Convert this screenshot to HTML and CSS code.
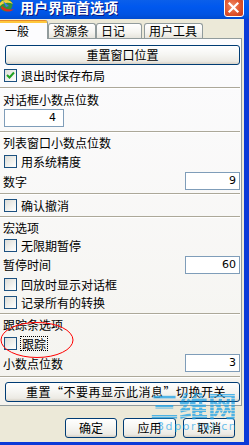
FILE: index.html
```html
<!DOCTYPE html>
<html>
<head>
<meta charset="utf-8">
<link rel="stylesheet" href="styles.css">
</head>
<body>
<div class="window">
  <div class="titlebar">
    <svg class="app-icon" viewBox="0 0 15 14" width="15" height="14">
      <circle cx="6" cy="5" r="6.5" fill="#2f8f3c"/>
      <path d="M0 3 C3 -1 10 -1 13 4 C9 2 4 2 0 6 Z" fill="#f4d23a"/>
      <path d="M1 8 C4 12 10 13 14 9 C11 10 6 10 2 6 Z" fill="#d8321e"/>
      <path d="M3 1 L9 6 L6 7 Z" fill="#3c7de0"/>
    </svg>
    <span class="title">用户界面首选项</span>
    <span class="close">
      <svg viewBox="0 0 19 19" width="19" height="19"><path d="M5.5 5.5 L13.5 13.5 M13.5 5.5 L5.5 13.5" stroke="#fff" stroke-width="2.2" stroke-linecap="square"/></svg>
    </span>
  </div>
  <div class="frame">
    <div class="tabs">
      <div class="tab active w-a">一般</div>
      <div class="tab w-b">资源条</div>
      <div class="tab w-c">日记</div>
      <div class="tab w-d">用户工具</div>
    </div>
    <div class="panel">
      <div class="btn wide mt6">重置窗口位置</div>
      <div class="row r20"><span class="cb"><svg viewBox="0 0 11 11" width="11" height="11"><path d="M2 5 L4.5 7.5 L9 2.5" fill="none" stroke="#21a121" stroke-width="2"/></svg></span><span>退出时保存布局</span></div>
      <div class="sep mt2"></div>
      <div class="row r20">对话框小数点位数</div>
      <div class="row r18"><span class="num small">4</span></div>
      <div class="sep mt4"></div>
      <div class="row r18">列表窗口小数点位数</div>
      <div class="row r20"><span class="cb"></span><span>用系统精度</span></div>
      <div class="row r20"><span>数字</span><span class="num">9</span></div>
      <div class="sep mt2"></div>
      <div class="row r20"><span class="cb"></span><span>确认撤消</span></div>
      <div class="sep mt1"></div>
      <div class="row r18">宏选项</div>
      <div class="row r18"><span class="cb"></span><span>无限期暂停</span></div>
      <div class="row r21"><span>暂停时间</span><span class="num">60</span></div>
      <div class="row r18"><span class="cb"></span><span>回放时显示对话框</span></div>
      <div class="row r18"><span class="cb"></span><span>记录所有的转换</span></div>
      <div class="sep mt2"></div>
      <div class="row r19">跟踪条选项</div>
      <div class="row r18"><span class="cb"></span><span class="focus">跟踪</span></div>
      <div class="row r22"><span>小数点位数</span><span class="num">3</span></div>
      <div class="sep mt2"></div>
      <div class="btn wide mt4 long">重置“不要再显示此消息”切换开关</div>
    </div>
    <div class="footer">
      <div class="btn ok">确定</div>
      <div class="btn apply">应用</div>
      <div class="btn cancel">取消</div>
    </div>
  </div>
  <svg class="mark" viewBox="0 0 75 38" width="75" height="38"><ellipse cx="37" cy="19" rx="36" ry="17.5" fill="none" stroke="#f00" stroke-width="1"/></svg>
  <div class="watermark">
    <div class="wm-big">三维网</div>
    <div class="wm-small">3dportal.cn</div>
  </div>
</div>
</body>
</html>
```

FILE: styles.css
```css
* { box-sizing: border-box; }
html, body { margin: 0; padding: 0; }
body {
  width: 249px;
  height: 445px;
  overflow: hidden;
  background: #ece9d8;
  font-family: "Noto Sans CJK SC", "Noto Sans", sans-serif;
  font-size: 12px;
  color: #000;
}
.window {
  position: relative;
  width: 249px;
  height: 445px;
  display: flex;
  flex-direction: column;
}
.titlebar {
  position: relative;
  height: 19px;
  flex: none;
  background: linear-gradient(#0a5fea, #0058ee 35%, #0054e3 75%, #004bd0);
}
.app-icon { position: absolute; left: 0; top: 0; }
.title {
  position: absolute;
  left: 20px;
  top: 0;
  color: #fff;
  font-weight: bold;
  font-size: 14px;
  line-height: 15px;
  text-shadow: 1px 1px #0a1883;
  white-space: nowrap;
}
.close {
  position: absolute;
  left: 224px;
  top: -2px;
  width: 20px;
  height: 19px;
  border: 1px solid #fff;
  border-radius: 3px;
  background: radial-gradient(circle at 40% 40%, #f08a64, #e0542c 55%, #c5391a);
}
.close svg { position: absolute; left: -1px; top: -1px; }
.frame {
  flex: 1;
  display: flex;
  flex-direction: column;
  border-right: 5px solid #0b3ad8;
  border-bottom: 3px solid #0b3ad8;
}
.tabs {
  height: 19px;
  flex: none;
  display: flex;
  align-items: flex-end;
  position: relative;
  z-index: 1;
}
.tab {
  height: 15px;
  border: 1px solid #919b9c;
  border-bottom: none;
  border-radius: 3px 3px 0 0;
  background: linear-gradient(#ffffff, #f5f4f0 60%, #e6e4dc);
  line-height: 13px;
  padding-left: 4px;
  white-space: nowrap;
}
.tab.active {
  height: 19px;
  margin-bottom: -1px;
  border: none;
  border-right: 1px solid #919b9c;
  border-radius: 0 3px 0 0;
  background: linear-gradient(#e68b2c 0 1px, #ffc83c 1px 3px, #fcfcfe 3px);
  padding-top: 4px;
  padding-left: 5px;
  line-height: 14px;
}
.w-a { width: 48px; }
.w-b { width: 48px; }
.w-c { width: 46px; }
.w-d { width: 59px; margin-left: 2px; }
.panel {
  height: 368px;
  flex: none;
  margin-right: 2px;
  border: 1px solid #919b9c;
  border-left: none;
  background: linear-gradient(#fcfcfe, #f4f3ee);
  padding: 0 1px 0 3px;
  display: flex;
  flex-direction: column;
}
.row {
  display: flex;
  align-items: center;
  white-space: nowrap;
  flex: none;
}
.r18 { height: 18px; }
.r19 { height: 19px; }
.r20 { height: 20px; }
.r21 { height: 21px; }
.r22 { height: 22px; }
.mt1 { margin-top: 1px; }
.mt2 { margin-top: 2px; }
.mt4 { margin-top: 4px; }
.mt6 { margin-top: 6px; }
.cb {
  width: 13px;
  height: 13px;
  flex: none;
  margin-left: 1px;
  margin-right: 4px;
  border: 1px solid #1c5180;
  background: linear-gradient(135deg, #dcdcd7, #f6f6f3 70%, #ffffff);
  display: flex;
  align-items: center;
  justify-content: center;
}
.sep {
  flex: none;
  height: 2px;
  margin-left: -3px;
  border-top: 1px solid #aca899;
  border-bottom: 1px solid #ffffff;
}
.num {
  margin-left: auto;
  width: 55px;
  height: 18px;
  border: 1px solid #7f9db9;
  background: #fff;
  font-family: "DejaVu Sans", sans-serif;
  font-size: 11px;
  line-height: 16px;
  text-align: right;
  padding-right: 3px;
}
.num.small {
  margin-left: 1px;
  width: 60px;
  height: 18px;
  padding-right: 7px;
}
.focus {
  outline: 1px dotted #000;
  outline-offset: 0;
  padding: 0 1px;
  line-height: 13px;
}
.btn {
  flex: none;
  height: 20px;
  border: 1px solid #003c74;
  border-radius: 3px;
  background: linear-gradient(#ffffff, #f6f6f3 45%, #eceae4 85%, #d6d0c5);
  display: flex;
  align-items: center;
  justify-content: center;
  white-space: nowrap;
  line-height: 14px;
}
.btn.wide { margin-left: 2px; }
.btn.long { justify-content: flex-start; padding-left: 20px; letter-spacing: 0.5px; }
.footer {
  flex: 1;
  display: flex;
  align-items: flex-start;
  padding-top: 12px;
}
.footer .btn { width: 52px; }
.ok { margin-left: 65px; }
.apply { margin-left: 6px; width: 53px !important; }
.cancel { margin-left: 7px; }
.mark {
  position: absolute;
  left: 0;
  top: 321px;
}
.watermark {
  position: absolute;
  left: 150px;
  top: 390px;
  pointer-events: none;
}
.wm-big {
  font-size: 29px;
  line-height: 30px;
  font-weight: bold;
  color: transparent;
  background: repeating-linear-gradient(to bottom, rgba(40,165,230,0.8) 0 2px, rgba(40,165,230,0.3) 2px 3px);
  -webkit-background-clip: text;
  background-clip: text;
  white-space: nowrap;
}
.wm-small {
  margin-left: 7px;
  margin-top: 1px;
  font-family: "DejaVu Sans", sans-serif;
  font-size: 11px;
  line-height: 12px;
  letter-spacing: 1.6px;
  color: rgba(40,165,230,0.7);
  white-space: nowrap;
}
```
